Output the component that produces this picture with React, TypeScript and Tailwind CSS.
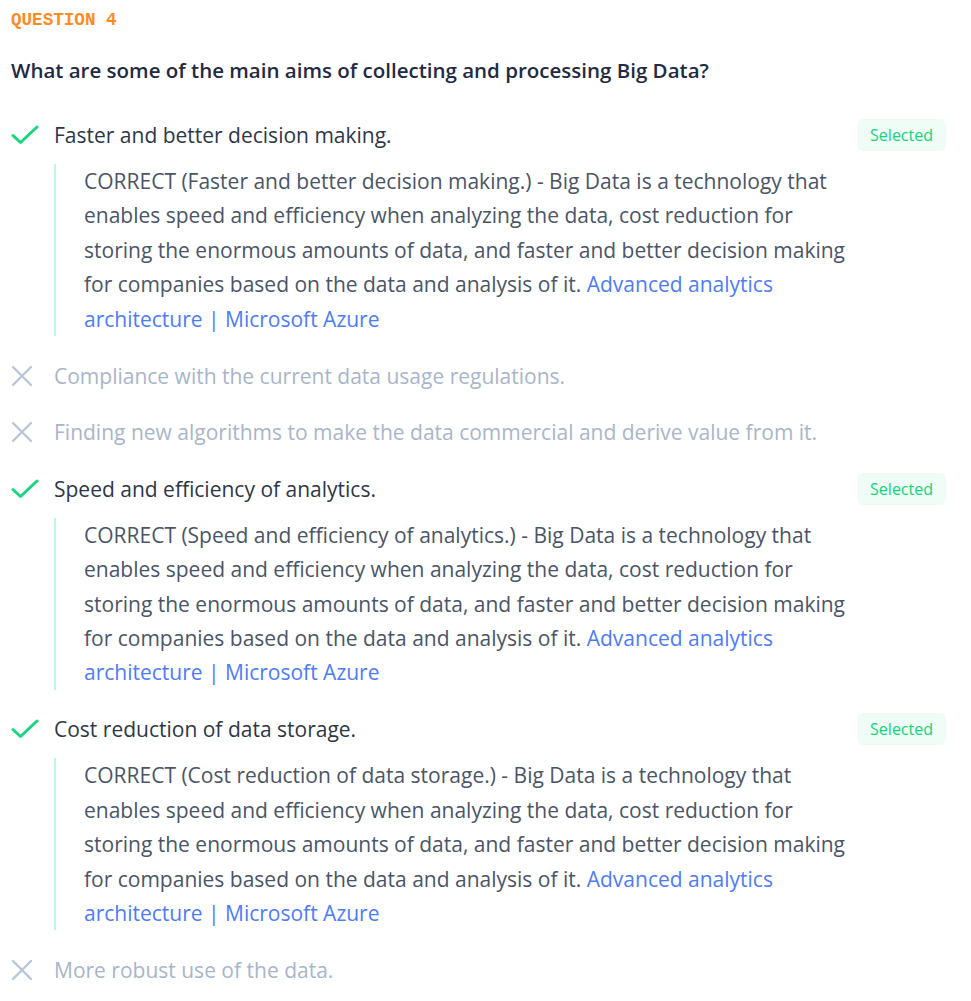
const explanation =
  ' - Big Data is a technology that enables speed and efficiency when analyzing the data, cost reduction for storing the enormous amounts of data, and faster and better decision making for companies based on the data and analysis of it. '

type Option = { text: string; correct: boolean }

const options: Option[] = [
  { text: 'Faster and better decision making.', correct: true },
  { text: 'Compliance with the current data usage regulations.', correct: false },
  { text: 'Finding new algorithms to make the data commercial and derive value from it.', correct: false },
  { text: 'Speed and efficiency of analytics.', correct: true },
  { text: 'Cost reduction of data storage.', correct: true },
  { text: 'More robust use of the data.', correct: false },
]

function CheckIcon() {
  return (
    <svg width="28" height="20" viewBox="0 0 28 20" fill="none">
      <path d="M2 10.5 L9.5 17.5 L26 2" stroke="#17d67f" strokeWidth="3" strokeLinecap="round" strokeLinejoin="round" />
    </svg>
  )
}

function CrossIcon() {
  return (
    <svg width="22" height="22" viewBox="0 0 22 22" fill="none">
      <path d="M2 2 L20 20 M20 2 L2 20" stroke="#b9c5da" strokeWidth="2.4" strokeLinecap="round" />
    </svg>
  )
}

function OptionRow({ option }: { option: Option }) {
  return (
    <div className="flex flex-col">
      <div className="flex items-center h-[34px]">
        <div className="w-[43px] flex items-center">
          {option.correct ? <CheckIcon /> : <CrossIcon />}
        </div>
        <div className={`flex-1 ${option.correct ? 'text-[#2d3748]' : 'text-[#a9b5ca]'}`}>{option.text}</div>
        {option.correct && (
          <div className="mr-[25px] h-[32px] px-[13px] rounded-md bg-[#effdf6] text-[#12d47c] text-[16px] flex items-center">
            Selected
          </div>
        )}
      </div>
      {option.correct && (
        <div className="mt-[12px] ml-[43px] border-l-2 border-[#c4f5df] pl-[28px] pr-[117px] text-[#4a5568] leading-[34.4px]">
          CORRECT ({option.text}){explanation}
          <span className="text-[#4d7cf7]">Advanced analytics architecture | Microsoft Azure</span>
        </div>
      )}
    </div>
  )
}

export default function App() {
  return (
    <div className="bg-white min-h-screen pl-[11px] pt-[9px] text-[21px] leading-[34px]" style={{ fontFamily: '"Open Sans", "Noto Sans", sans-serif' }}>
      <div className="text-[17.6px] leading-[22px] font-bold text-[#ff8a1f]" style={{ fontFamily: '"Liberation Mono", monospace' }}>
        QUESTION 4
      </div>
      <h2 className="mt-[25px] text-[20.5px] leading-[28px] font-semibold text-[#1f2a44]">
        What are some of the main aims of collecting and processing Big Data?
      </h2>
      <div className="mt-[34px] flex flex-col gap-[22.6px]">
        {options.map((o, i) => (
          <OptionRow key={i} option={o} />
        ))}
      </div>
    </div>
  )
}
